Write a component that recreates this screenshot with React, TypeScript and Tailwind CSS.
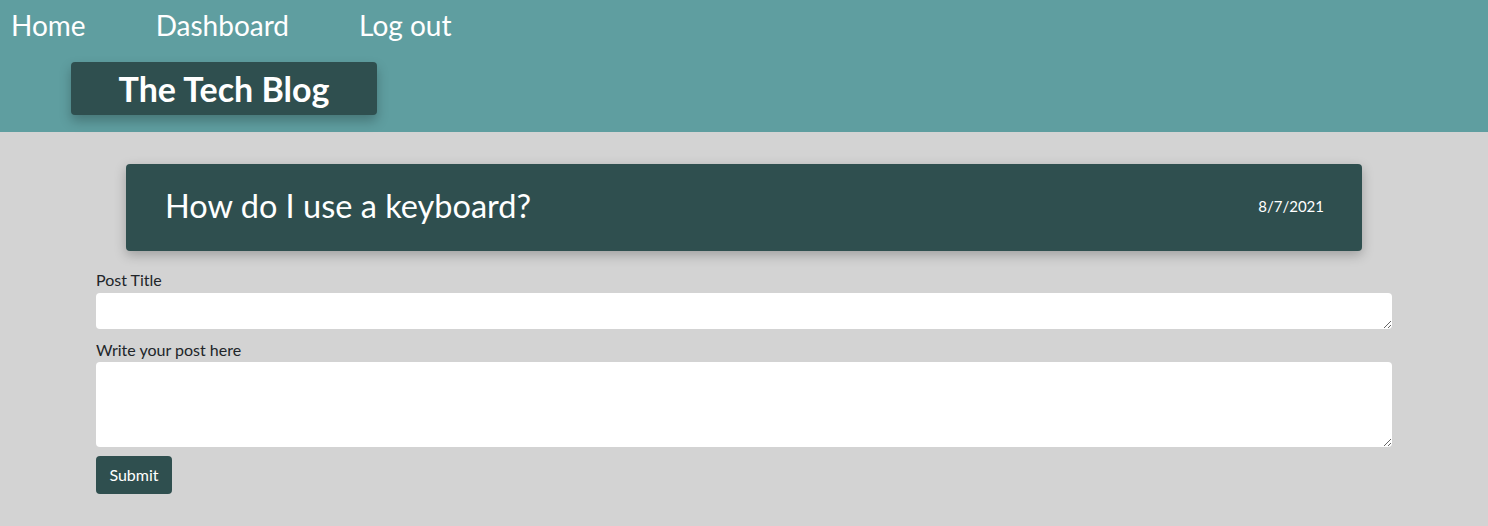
const App = () => {
  return (
    <div
      className="min-h-[526px] bg-[#d3d3d3] text-[#212529]"
      style={{ fontFamily: "Lato, 'Noto Sans', sans-serif" }}
    >
      {/* Header */}
      <header className="h-[132px] bg-[#5f9ea0] pt-[6px]">
        <nav className="flex gap-[70px] pl-[11px] text-[28px] leading-[38px] text-white">
          <a href="#">Home</a>
          <a href="#">Dashboard</a>
          <a href="#">Log out</a>
        </nav>
        <div className="ml-[71px] mt-[18px] flex h-[53px] w-[306px] items-center justify-center rounded bg-[#2f4f4f] shadow-[0_6px_12px_rgba(0,0,0,0.25)]">
          <h1 className="text-[34px] font-bold leading-none text-white">The Tech Blog</h1>
        </div>
      </header>

      {/* Main */}
      <main className="mx-auto w-[1320px] px-3 pt-8">
        <div className="mx-[30px] flex h-[87px] items-center justify-between rounded bg-[#2f4f4f] pb-[2px] pl-[39px] pr-[38px] text-white shadow-[0_4px_12px_rgba(0,0,0,0.25)]">
          <h2 className="text-[32.5px] leading-none">How do I use a keyboard?</h2>
          <span className="text-[15px]">8/7/2021</span>
        </div>

        <form className="mt-[17px] flex flex-col" onSubmit={(e) => e.preventDefault()}>
          <label className="text-[16px] leading-6">Post Title</label>
          <textarea className="mt-px h-[36px] w-full rounded bg-white px-3 outline-none" />
          <label className="mt-[9px] text-[16px] leading-6">Write your post here</label>
          <textarea className="h-[85px] w-full rounded bg-white px-3 outline-none" />
          <div className="mt-[9px]">
            <button
              type="submit"
              className="h-[38px] w-[76px] rounded bg-[#2f4f4f] text-[16px] text-white"
            >
              Submit
            </button>
          </div>
        </form>
      </main>
    </div>
  );
};

export default App;
